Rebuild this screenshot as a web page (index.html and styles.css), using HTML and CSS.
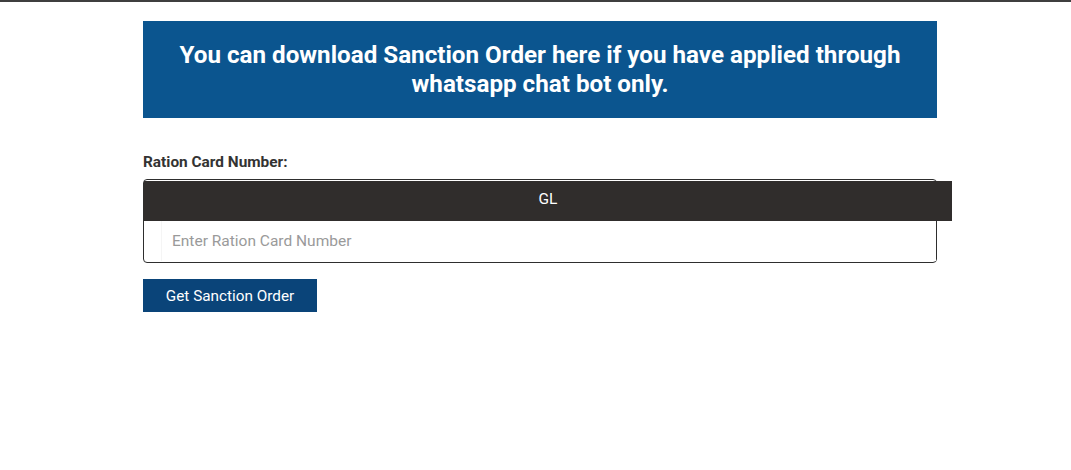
FILE: index.html
```html
<!DOCTYPE html>
<html>
<head>
<meta charset="utf-8">
<link rel="stylesheet" href="styles.css">
</head>
<body>
<div class="topline"></div>
<main class="container">
  <div class="banner">
    <h2>You can download Sanction Order here if you have applied through whatsapp chat bot only.</h2>
  </div>
  <form class="form">
    <label class="label">Ration Card Number:</label>
    <div class="group">
      <div class="prefix">GL</div>
      <div class="field">
        <input type="text" placeholder="Enter Ration Card Number">
      </div>
    </div>
    <button type="button" class="btn">Get Sanction Order</button>
  </form>
</main>
</body>
</html>
```

FILE: styles.css
```css
html, body {
  margin: 0;
  padding: 0;
  background: #fff;
  font-family: Roboto, "Liberation Sans", sans-serif;
}
.topline {
  height: 2px;
  background: #3f3f3f;
}
.container {
  width: 794px;
  margin: 19px 0 0 143px;
}
.banner {
  background: #0b558f;
  height: 97px;
  box-sizing: border-box;
  display: flex;
  align-items: center;
  justify-content: center;
  padding: 1px 20px 0;
}
.banner h2 {
  margin: 0;
  color: #fff;
  font-size: 24.2px;
  font-weight: 700;
  line-height: 29px;
  text-align: center;
}
.form {
  margin-top: 34px;
  display: flex;
  flex-direction: column;
  align-items: flex-start;
}
.label {
  font-size: 15.4px;
  font-weight: 700;
  color: #333;
  line-height: 18px;
  margin-top: 1px;
  margin-bottom: 8px;
}
.group {
  width: 794px;
  box-sizing: border-box;
  border: 1px solid #2e2e2e;
  border-radius: 4px;
  padding-top: 1px;
}
.prefix {
  width: 808px;
  height: 40px;
  box-sizing: border-box;
  padding-bottom: 4px;
  background: #302d2c;
  color: #fff;
  font-size: 15.5px;
  display: flex;
  align-items: center;
  justify-content: center;
}
.field {
  margin-left: 17px;
  height: 41px;
}
.field input {
  width: 100%;
  height: 40px;
  box-sizing: border-box;
  border: none;
  border-left: 1px solid #f5f5f5;
  padding: 0 10px;
  font-family: Roboto, "Liberation Sans", sans-serif;
  font-size: 15.5px;
  color: #333;
  outline: none;
  background: #fff;
}
.field input::placeholder {
  color: #9a9a9a;
}
.btn {
  margin-top: 16px;
  width: 174px;
  height: 33px;
  background: #0a4479;
  color: #fff;
  border: none;
  font-family: Roboto, "Liberation Sans", sans-serif;
  font-size: 15.3px;
  padding: 0;
}
```
